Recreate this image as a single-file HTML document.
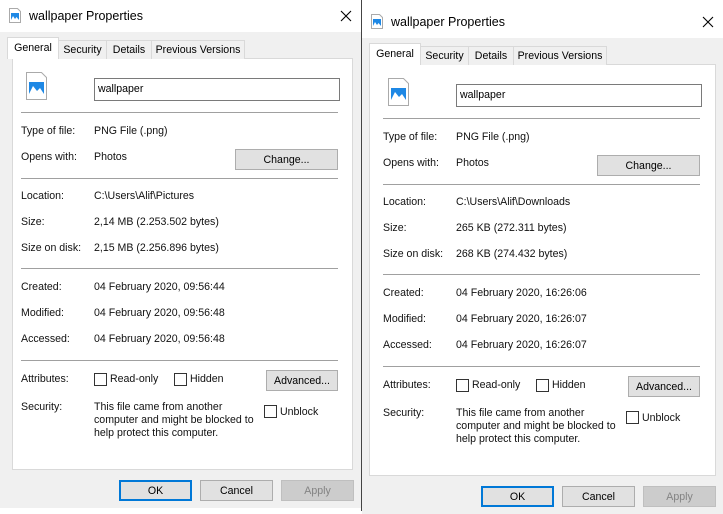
<!DOCTYPE html>
<html><head><meta charset="utf-8"><style>
*{margin:0;padding:0;box-sizing:border-box}
body{width:723px;height:511px;background:#fff;position:relative;overflow:hidden;font-family:"Liberation Sans",sans-serif;font-size:10.6px;color:#000}
.dlg{position:absolute;width:361px;height:508px;background:#f0f0f0;overflow:hidden}
.dlg>*{position:absolute}
.tb{left:0;top:0;width:361px;height:32px;background:#fff}
.ttl{left:29px;top:9px;font-size:12.5px}
.tab{top:40px;height:19px;border:1px solid #d9d9d9;border-bottom:none;background:#f0f0f0;padding:3px 0 0 0;text-align:center;font-size:10.6px}
.tab.sel{top:37px;height:22px;background:#fff;z-index:2;padding-top:4px}
.pan{left:12px;top:58px;width:341px;height:412px;background:#fff;border:1px solid #d9d9d9}
.l{font-size:10.6px;white-space:nowrap;color:#111}
.sep{left:21px;width:317px;height:1px;background:#a0a0a0}
.btn{background:#e1e1e1;border:1px solid #adadad;text-align:center;font-size:10.6px;padding-top:4px}
.cb{width:13px;height:13px;border:1px solid #333;background:#fff}
.tx{left:94px;top:78px;width:246px;height:23px;border:1px solid #7a7a7a;background:#fff;padding:4px 0 0 3px}
</style></head><body>
<div style="position:absolute;left:361px;top:0;width:1px;height:511px;background:#444"></div>

<div class="dlg" style="left:0;top:0">
<div class="tb"></div>
<svg style="left:9px;top:8px" width="12" height="15" viewBox="0 0 12 15"><path d="M.5.5h8l3 3v11H.5z" fill="#fff" stroke="#aaa"/><rect x="2" y="5" width="8" height="7" fill="#1e88e5"/><path d="M2 12l2-4 2 3 1.5-2 2.5 3z" fill="#fff"/></svg>
<div class="ttl">wallpaper Properties</div>
<svg style="left:340px;top:10px" width="12" height="12" viewBox="0 0 12 12"><path d="M1 1l10 10M11 1L1 11" stroke="#000" stroke-width="1.1"/></svg>
<div class="pan"></div>
<div class="tab sel" style="left:7px;width:52px">General</div>
<div class="tab" style="left:58px;width:49px">Security</div>
<div class="tab" style="left:106px;width:46px">Details</div>
<div class="tab" style="left:151px;width:94px">Previous Versions</div>
<svg style="left:26px;top:72px" width="21" height="28" viewBox="0 0 21 28"><path d="M.5.5h15l5 5v22H.5z" fill="#fff" stroke="#aaa"/><rect x="3" y="10" width="15" height="12" fill="#1e88e5"/><path d="M3 22l4-8 4 5 3-3 4 6z" fill="#fff"/></svg>
<div class="tx">wallpaper</div>
<div class="sep" style="top:112px"></div>
<div class="l" style="left:21px;top:125px">Type of file:</div><div class="l" style="left:94px;top:125px">PNG File (.png)</div>
<div class="l" style="left:21px;top:151px">Opens with:</div><div class="l" style="left:94px;top:151px">Photos</div>
<div class="btn" style="left:235px;top:149px;width:103px;height:21px">Change...</div>
<div class="sep" style="top:178px"></div>
<div class="l" style="left:21px;top:190px">Location:</div><div class="l" style="left:94px;top:190px">C:\Users\Alif\Pictures</div>
<div class="l" style="left:21px;top:216px">Size:</div><div class="l" style="left:94px;top:216px">2,14 MB (2.253.502 bytes)</div>
<div class="l" style="left:21px;top:242px">Size on disk:</div><div class="l" style="left:94px;top:242px">2,15 MB (2.256.896 bytes)</div>
<div class="sep" style="top:268px"></div>
<div class="l" style="left:21px;top:281px">Created:</div><div class="l" style="left:94px;top:281px">04 February 2020, 09:56:44</div>
<div class="l" style="left:21px;top:307px">Modified:</div><div class="l" style="left:94px;top:307px">04 February 2020, 09:56:48</div>
<div class="l" style="left:21px;top:333px">Accessed:</div><div class="l" style="left:94px;top:333px">04 February 2020, 09:56:48</div>
<div class="sep" style="top:360px"></div>
<div class="l" style="left:21px;top:373px">Attributes:</div>
<div class="cb" style="left:94px;top:373px"></div><div class="l" style="left:110px;top:373px">Read-only</div>
<div class="cb" style="left:174px;top:373px"></div><div class="l" style="left:190px;top:373px">Hidden</div>
<div class="btn" style="left:266px;top:370px;width:72px;height:21px">Advanced...</div>
<div class="l" style="left:21px;top:401px">Security:</div>
<div class="l" style="left:94px;top:401px;line-height:13px">This file came from another<br>computer and might be blocked to<br>help protect this computer.</div>
<div class="cb" style="left:264px;top:405px"></div><div class="l" style="left:280px;top:406px">Unblock</div>
<div class="btn" style="left:119px;top:480px;width:73px;height:21px;border:2px solid #0078d7;padding-top:3px">OK</div>
<div class="btn" style="left:200px;top:480px;width:73px;height:21px">Cancel</div>
<div class="btn" style="left:281px;top:480px;width:73px;height:21px;background:#ccc;border-color:#bfbfbf;color:#838383">Apply</div>
</div>

<div class="dlg" style="left:362px;top:6px">
<div class="tb"></div>
<svg style="left:9px;top:8px" width="12" height="15" viewBox="0 0 12 15"><path d="M.5.5h8l3 3v11H.5z" fill="#fff" stroke="#aaa"/><rect x="2" y="5" width="8" height="7" fill="#1e88e5"/><path d="M2 12l2-4 2 3 1.5-2 2.5 3z" fill="#fff"/></svg>
<div class="ttl">wallpaper Properties</div>
<svg style="left:340px;top:10px" width="12" height="12" viewBox="0 0 12 12"><path d="M1 1l10 10M11 1L1 11" stroke="#000" stroke-width="1.1"/></svg>
<div class="pan" style="left:7px;width:347px"></div>
<div class="tab sel" style="left:7px;width:52px">General</div>
<div class="tab" style="left:58px;width:49px">Security</div>
<div class="tab" style="left:106px;width:46px">Details</div>
<div class="tab" style="left:151px;width:94px">Previous Versions</div>
<svg style="left:26px;top:72px" width="21" height="28" viewBox="0 0 21 28"><path d="M.5.5h15l5 5v22H.5z" fill="#fff" stroke="#aaa"/><rect x="3" y="10" width="15" height="12" fill="#1e88e5"/><path d="M3 22l4-8 4 5 3-3 4 6z" fill="#fff"/></svg>
<div class="tx">wallpaper</div>
<div class="sep" style="top:112px"></div>
<div class="l" style="left:21px;top:125px">Type of file:</div><div class="l" style="left:94px;top:125px">PNG File (.png)</div>
<div class="l" style="left:21px;top:151px">Opens with:</div><div class="l" style="left:94px;top:151px">Photos</div>
<div class="btn" style="left:235px;top:149px;width:103px;height:21px">Change...</div>
<div class="sep" style="top:178px"></div>
<div class="l" style="left:21px;top:190px">Location:</div><div class="l" style="left:94px;top:190px">C:\Users\Alif\Downloads</div>
<div class="l" style="left:21px;top:216px">Size:</div><div class="l" style="left:94px;top:216px">265 KB (272.311 bytes)</div>
<div class="l" style="left:21px;top:242px">Size on disk:</div><div class="l" style="left:94px;top:242px">268 KB (274.432 bytes)</div>
<div class="sep" style="top:268px"></div>
<div class="l" style="left:21px;top:281px">Created:</div><div class="l" style="left:94px;top:281px">04 February 2020, 16:26:06</div>
<div class="l" style="left:21px;top:307px">Modified:</div><div class="l" style="left:94px;top:307px">04 February 2020, 16:26:07</div>
<div class="l" style="left:21px;top:333px">Accessed:</div><div class="l" style="left:94px;top:333px">04 February 2020, 16:26:07</div>
<div class="sep" style="top:360px"></div>
<div class="l" style="left:21px;top:373px">Attributes:</div>
<div class="cb" style="left:94px;top:373px"></div><div class="l" style="left:110px;top:373px">Read-only</div>
<div class="cb" style="left:174px;top:373px"></div><div class="l" style="left:190px;top:373px">Hidden</div>
<div class="btn" style="left:266px;top:370px;width:72px;height:21px">Advanced...</div>
<div class="l" style="left:21px;top:401px">Security:</div>
<div class="l" style="left:94px;top:401px;line-height:13px">This file came from another<br>computer and might be blocked to<br>help protect this computer.</div>
<div class="cb" style="left:264px;top:405px"></div><div class="l" style="left:280px;top:406px">Unblock</div>
<div class="btn" style="left:119px;top:480px;width:73px;height:21px;border:2px solid #0078d7;padding-top:3px">OK</div>
<div class="btn" style="left:200px;top:480px;width:73px;height:21px">Cancel</div>
<div class="btn" style="left:281px;top:480px;width:73px;height:21px;background:#ccc;border-color:#bfbfbf;color:#838383">Apply</div>
</div>
</body></html>
